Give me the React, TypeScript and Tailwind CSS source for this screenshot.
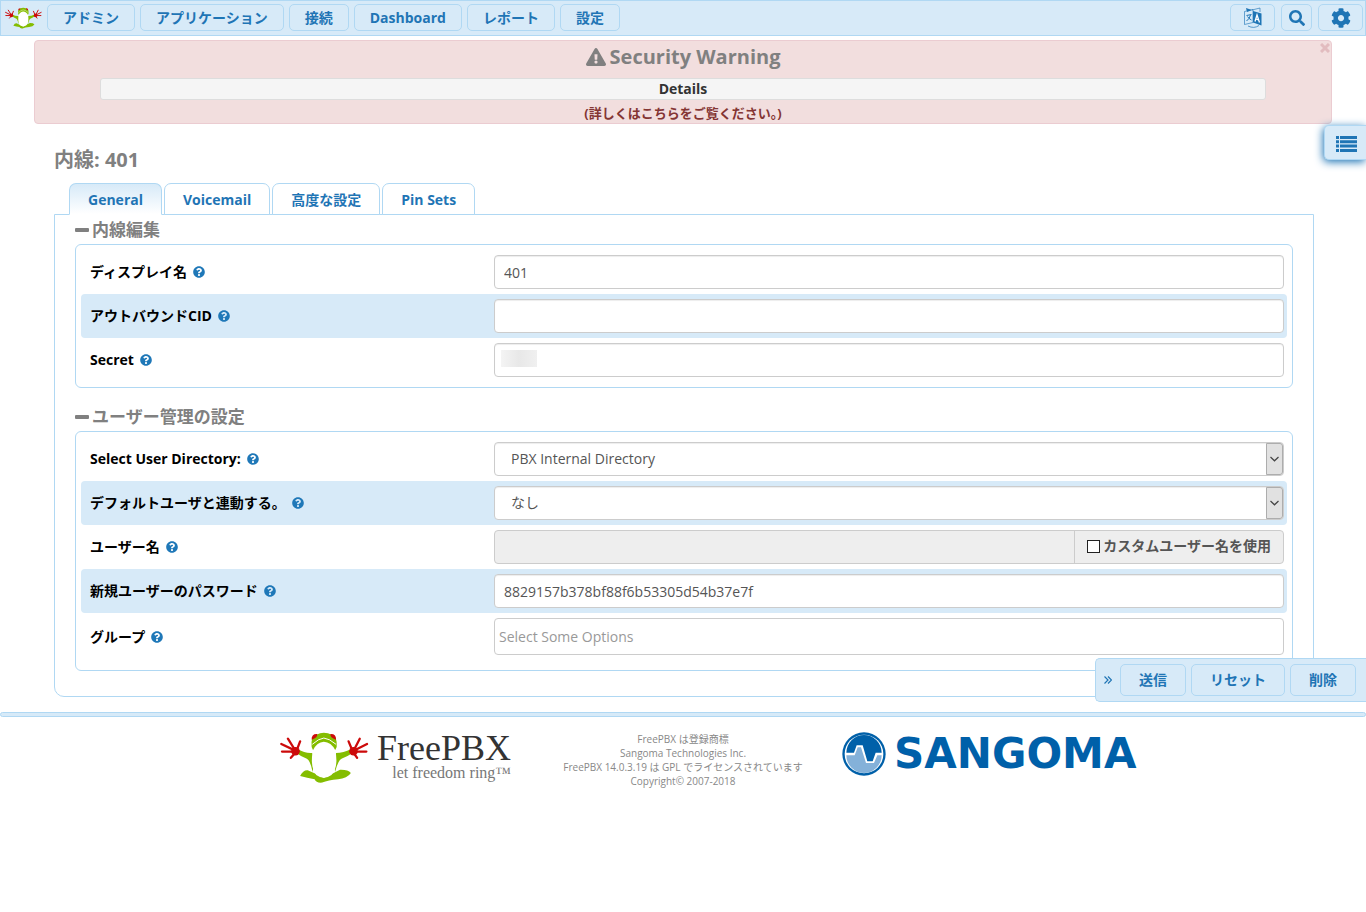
import { useState, type ReactNode } from 'react'
import { FaCog, FaExclamationTriangle, FaQuestionCircle, FaSearch } from 'react-icons/fa'

const NAV_LINKS = ['アドミン', 'アプリケーション', '接続', 'Dashboard', 'レポート', '設定']
const TABS = ['General', 'Voicemail', '高度な設定', 'Pin Sets']

const inputClass =
  'block w-full h-[34px] rounded-[4px] border border-[#ccc] bg-white px-[9px] text-sm text-[#555] shadow-[inset_0_1px_1px_rgba(0,0,0,0.075)] outline-none'

function Frog({ className }: { className: string }) {
  return (
    <svg viewBox="14 14 270 160" className={className} aria-hidden="true">
      {/* arms, sides and legs */}
      <g className="fill-[#84bd00]">
        <path d="M68 68Q90 82 112 80Q120 98 113 138Q106 102 94 97Q80 92 64 80Z" />
        <path d="M230 68Q206 80 184 80Q176 98 181 138Q190 102 202 97Q216 92 234 80Z" />
        <path d="M75 150Q84 132 98 133Q120 142 147 156Q175 142 196 131Q220 130 229 141Q218 158 190 160Q160 163 142 170Q124 172 119 160Q96 156 75 150Z" />
      </g>
      {/* head and belly */}
      <path d="M110 62Q106 32 124 25Q136 19 147 19Q160 19 171 25Q189 32 186 62L178 78H117Z" className="fill-[#84bd00]" />
      <path d="M114 72Q126 47 147 46Q169 47 182 72Q192 124 170 147Q147 164 124 147Q104 122 114 72Z" fill="#fff" />
      <path d="M112 54Q132 36 147 35Q163 36 184 54" fill="none" stroke="#fff" strokeWidth="3" />
      <path d="M110 40Q109 22 127 23Q129 34 110 40Z" className="fill-[#cc0a0a]" />
      <path d="M184 40Q185 22 167 23Q165 34 184 40Z" className="fill-[#cc0a0a]" />
      {/* hands */}
      <g fill="none" stroke="#cc0a0a" strokeWidth="7" strokeLinecap="round">
        <path d="M62 74L18 53M60 72L38 37M64 74L75 45M60 76L20 76M62 78L47 95" />
        <path d="M236 74L278 53M238 72L256 37M234 74L222 45M238 76L276 76M236 78L248 95" />
      </g>
      <circle cx="61" cy="75" r="13" fill="#cc0a0a" />
      <circle cx="237" cy="75" r="13" fill="#cc0a0a" />
    </svg>
  )
}

function LanguageIcon() {
  return (
    <svg viewBox="0 0 20 21" className="w-5 h-[21px]" fill="none" stroke="currentColor" aria-hidden="true">
      <path d="M1.500 4.500L10 2.500V15.500L1.500 17.500Z" strokeWidth="0.900" opacity="0.700" />
      <path d="M10 4L18.500 6.500V18.500L10 15.500Z" fill="currentColor" stroke="none" />
      <path d="M3 1L9 3L4 5Z" fill="currentColor" stroke="none" />
      <path d="M9 3L17 1V5" strokeWidth="0.900" opacity="0.700" />
      <path d="M5 19Q11 22 16 18.500" strokeWidth="1" opacity="0.700" />
      <path d="M3.500 8.500L8.500 7.500M7.500 8Q6.500 12 3.500 14M4.500 9.500Q6 12 8.500 13" strokeWidth="1" />
      <path d="M12 14.500L14 8L16.500 15.500M12.800 12L15.500 12.800" stroke="#fff" strokeWidth="1.300" />
    </svg>
  )
}

function ListIcon() {
  return (
    <svg viewBox="0 0 21 16" className="w-[21px] h-4" fill="currentColor" aria-hidden="true">
      <path d="M0 0h3v3H0zM4 0h17v3H4zM0 4.300h3v3H0zM4 4.300h17v3H4zM0 8.600h3v3H0zM4 8.600h17v3H4zM0 13h3v3H0zM4 13h17v3H4z" />
    </svg>
  )
}

function SangomaMark() {
  return (
    <svg viewBox="0 0 132 132" className="w-11 h-11 shrink-0" aria-hidden="true">
      <circle cx="66" cy="66" r="65" fill="#0060a9" />
      <circle cx="66" cy="66" r="58" fill="#fff" />
      <path d="M13 62A53 53 0 0 1 119 62H101L92 88H76L62 40H44L36 62Z" fill="#0060a9" />
      <path d="M13 70H38L47 46H57L72 93H96L106 70H119A53 53 0 0 1 13 70Z" fill="#84b1d9" />
    </svg>
  )
}

function Row({ id, label, children, shaded }: { id: string; label: string; children: ReactNode; shaded?: boolean }) {
  return (
    <div className={`flex items-center gap-1.5 rounded-[4px] py-[5px] pl-[9px] pr-[3px] ${shaded ? 'bg-[#d7eaf8]' : ''}`}>
      <div className="flex items-center gap-1.5 w-1/3 shrink-0">
        <label htmlFor={id} className="font-bold text-black leading-5">{label}</label>
        <FaQuestionCircle className="w-3 h-3 text-[#1f78b8]" />
      </div>
      <div className="relative flex-1 min-w-0">{children}</div>
    </div>
  )
}

function SelectBox({ id, option }: { id: string; option: string }) {
  return (
    <>
      <select id={id} className={`${inputClass} appearance-none pl-4`}>
        <option>{option}</option>
      </select>
      <span className="pointer-events-none absolute right-0 inset-y-0 my-px mr-px flex w-[17px] items-center justify-center rounded-r-[3px] border border-[#adadad] bg-[#e1e1e1] text-[#444]">
        <svg viewBox="0 0 9 6" className="w-[9px] h-1.5" fill="none" stroke="currentColor" strokeWidth="1.200">
          <path d="M0.500 1L4.500 4.800L8.500 1" />
        </svg>
      </span>
    </>
  )
}

function SectionTitle({ children }: { children: ReactNode }) {
  return (
    <h2 className="flex items-center gap-[3px] h-[29px] text-[17px] font-bold text-[#808080]">
      <svg viewBox="0 0 14 4" className="w-3.5 h-1" fill="currentColor" aria-hidden="true">
        <rect width="14" height="4" rx="1" />
      </svg>
      {children}
    </h2>
  )
}

export default function App() {
  const [activeTab, setActiveTab] = useState('General')
  const [showAlert, setShowAlert] = useState(true)

  const navButton =
    'flex items-center justify-center h-[27px] rounded-[5px] border border-[#b0d8f3] font-bold text-[#1f75b5]'
  const actionButton = 'h-8 rounded-[5px] border border-[#b0d8f3] px-[18px] font-bold text-[#1f75b5]'

  return (
    <div className="min-h-screen bg-white text-sm leading-5 text-[#333] font-['Open_Sans','Noto_Sans_CJK_JP',sans-serif]">
      <nav className="flex items-start justify-between h-9 border border-[#b0d8f3] bg-[#d7eaf8] px-0.5 pt-[3px]">
        <div className="flex items-center gap-[5px]">
          <a href="#" aria-label="FreePBX" className="pl-0.5">
            <Frog className="w-[37px] h-6" />
          </a>
          {NAV_LINKS.map((link) => (
            <button key={link} className={`${navButton} px-[15px]`}>{link}</button>
          ))}
        </div>
        <div className="flex items-center gap-1.5">
          <button aria-label="Language" className={`${navButton} w-[45px]`}><LanguageIcon /></button>
          <button aria-label="Search" className={`${navButton} w-[31px]`}><FaSearch className="w-4 h-4" /></button>
          <button aria-label="Settings" className={`${navButton} w-[45px]`}><FaCog className="w-5 h-5" /></button>
        </div>
      </nav>

      {showAlert && (
        <div className="relative mx-auto mt-1 w-[95%] rounded-[4px] border border-[#ebccd1] bg-[#f2dede] text-center font-bold">
          <button
            aria-label="Close"
            className="absolute right-px top-0.5 text-[#e2bcbf]"
            onClick={() => setShowAlert(false)}
          >
            <svg viewBox="0 0 10 10" className="w-2.5 h-2.5" stroke="currentColor" strokeWidth="3">
              <path d="M1 1L9 9M9 1L1 9" />
            </svg>
          </button>
          <h1 className="flex items-center justify-center gap-1 h-8 text-xl text-[#808080]">
            <FaExclamationTriangle className="w-5 h-5" />
            Security Warning
          </h1>
          <div className="mx-auto mt-[5px] w-[90%] rounded-[3px] border border-[#ddd] bg-[#f5f5f5]">Details</div>
          <a href="#" className="block h-[23px] pt-[3px] text-[13px] text-[#843534]">(詳しくはこちらをご覧ください。)</a>
        </div>
      )}

      <button
        aria-label="List"
        className="absolute right-0 top-[125px] flex h-[35px] w-[42px] items-center justify-center rounded-l-[5px] border border-r-0 border-[#b0d8f3] bg-[#d7eaf8] pl-0.5 pt-0.5 text-[#1f75b5] shadow-[-1px_2px_8px_#1f75b5]"
      >
        <ListIcon />
      </button>

      <main className="relative pl-[53px] pr-[52px] pb-[15px] pt-[22px]">
        <h1 className="h-7 pl-px text-xl leading-7 font-bold text-[#808080]">内線: 401</h1>
        <div role="tablist" className="mt-[9px] ml-4 flex gap-0.5">
          {TABS.map((tab) => (
            <button
              key={tab}
              role="tab"
              aria-selected={activeTab === tab}
              onClick={() => setActiveTab(tab)}
              className={`h-8 rounded-t-[7px] border border-[#b0d8f3] px-[18px] pt-0.5 font-bold text-[#1f75b5] ${
                activeTab === tab ? 'relative z-10 border-b-white bg-linear-to-b from-[#d7eaf8] to-white' : 'bg-white'
              }`}
            >
              {tab}
            </button>
          ))}
        </div>

        <div className="-mt-px ml-px rounded-b-[10px] border border-[#b0d8f3] px-5 pb-[25px]">
          <SectionTitle>内線編集</SectionTitle>
          <section className="rounded-[6px] border border-[#b0d8f3] p-[5px]">
            <Row id="name" label="ディスプレイ名">
              <input id="name" className={inputClass} defaultValue="401" />
            </Row>
            <Row id="outboundcid" label="アウトバウンドCID" shaded>
              <input id="outboundcid" className={inputClass} />
            </Row>
            <Row id="secret" label="Secret">
              <input id="secret" className={inputClass} />
              <span className="pointer-events-none absolute left-[7px] top-[7px] h-[17px] w-9 bg-linear-to-r from-[#f4f4f4] via-[#e8e8e8] to-[#f0f0f0]" />
            </Row>
          </section>

          <div className="mt-3.5">
            <SectionTitle>ユーザー管理の設定</SectionTitle>
          </div>
          <section className="rounded-[6px] border border-[#b0d8f3] px-[5px] pt-[5px] pb-2.5">
            <Row id="directory" label="Select User Directory:">
              <SelectBox id="directory" option="PBX Internal Directory" />
            </Row>
            <Row id="defaultuser" label="デフォルトユーザと連動する。" shaded>
              <SelectBox id="defaultuser" option="なし" />
            </Row>
            <Row id="username" label="ユーザー名">
              <div className="flex h-[34px] rounded-[4px] border border-[#ccc] bg-[#eee]">
                <input id="username" disabled className="min-w-0 flex-1 px-[9px]" />
                <label className="flex items-center gap-[3px] border-l border-[#ccc] px-3 pb-0.5 font-bold text-[#555]">
                  <input type="checkbox" className="h-[13px] w-[13px] appearance-none border border-[#222] bg-white checked:bg-[#1f75b5]" />
                  カスタムユーザー名を使用
                </label>
              </div>
            </Row>
            <Row id="password" label="新規ユーザーのパスワード" shaded>
              <input id="password" className={inputClass} defaultValue="8829157b378bf88f6b53305d54b37e7f" />
            </Row>
            <Row id="groups" label="グループ">
              <input
                id="groups"
                placeholder="Select Some Options"
                className="block h-[37px] w-full rounded-[4px] border border-[#ccc] bg-white px-1 text-sm outline-none placeholder:text-[#999]"
              />
            </Row>
          </section>
        </div>

        <div className="absolute bottom-2.5 right-0 flex items-center gap-[5px] rounded-l-[5px] border border-r-0 border-[#b0d8f3] bg-[#d7eaf8] py-[5px] pl-2 pr-2.5">
          <button aria-label="Collapse" className="flex w-[11px] text-[#1f75b5]">
            <svg viewBox="0 0 8 8" className="h-2 w-2" fill="none" stroke="currentColor" strokeWidth="1.200">
              <path d="M0.500 0.500L4 4L0.500 7.500M4 0.500L7.500 4L4 7.500" />
            </svg>
          </button>
          <button className={actionButton}>送信</button>
          <button className={actionButton}>リセット</button>
          <button className={actionButton}>削除</button>
        </div>
      </main>

      <footer>
        <div className="h-[5px] rounded-[4px] border border-[#b0d8f3] bg-[#d7eaf8]" />
        <div className="grid grid-cols-[1fr_240px_1fr] pt-3.5">
          <div className="flex items-start justify-end gap-2 pr-[52px]">
            <Frog className="w-[89px] h-[53px]" />
            <div className="text-right font-['Liberation_Serif',serif]">
              <div className="text-4xl leading-[34px] text-[#333]">FreePBX</div>
              <div className="text-base leading-4 text-[#777]">let freedom ring™</div>
            </div>
          </div>
          <p className="pt-px text-center text-[10px] leading-[14px] text-[#888] whitespace-nowrap">
            FreePBX は登録商標<br />
            Sangoma Technologies Inc.<br />
            FreePBX 14.0.3.19 は GPL でライセンスされています<br />
            Copyright© 2007-2018
          </p>
          <div className="flex items-center gap-2 self-start pl-[39px] pt-px">
            <SangomaMark />
            <span className="font-['DejaVu_Sans',sans-serif] text-[42px] leading-[44px] font-bold text-[#0060a9]">SANGOMA</span>
          </div>
        </div>
      </footer>
    </div>
  )
}
